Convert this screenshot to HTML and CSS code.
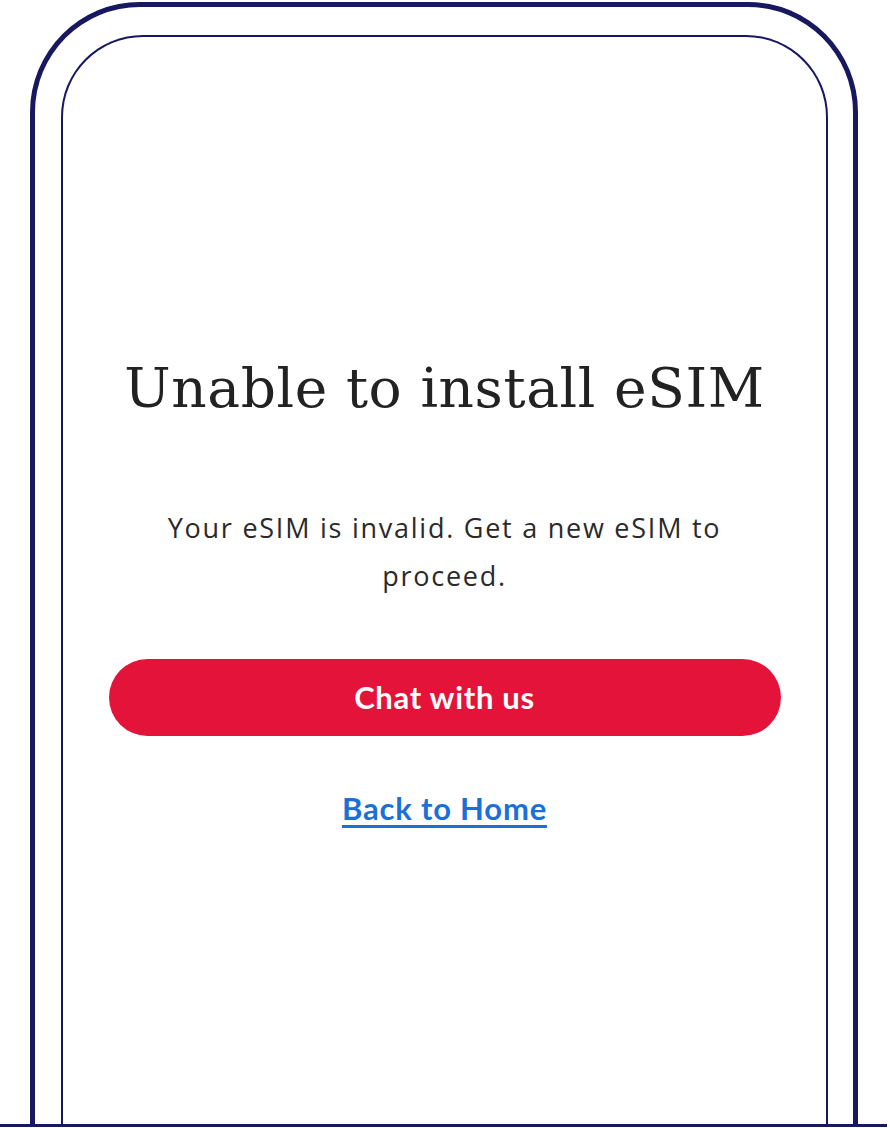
FILE: index.html
```html
<!DOCTYPE html>
<html lang="en">

<head>
    <meta charset="UTF-8">
    <meta name="viewport" content="width=device-width, initial-scale=1.0">
    <title>Unable to install eSIM</title>
    <link rel="stylesheet" href="styles.css">
</head>

<body>
    <div class="phone">
        <div class="screen">
            <div class="content">
                <h1 class="title">Unable to install eSIM</h1>
                <p class="message">Your eSIM is invalid. Get a new eSIM to proceed.</p>
                <a class="btn" href="#">Chat with us</a>
                <a class="link" href="#">Back to Home</a>
            </div>
        </div>
    </div>
    <div class="ground"></div>
</body>

</html>
```

FILE: styles.css
```css
html,
body {
    margin: 0;
    padding: 0;
    background: #fff;
}

body {
    width: 890px;
    height: 1128px;
    display: flex;
    flex-direction: column;
    overflow: hidden;
}

.phone {
    flex: 1;
    display: flex;
    width: 828px;
    margin: 2px 0 0 30px;
    border: 5px solid #17185f;
    border-bottom: none;
    border-radius: 110px 110px 0 0;
    padding: 28px 25px 0 26px;
    box-sizing: border-box;
}

.screen {
    flex: 1;
    border: 2.5px solid #17185f;
    border-bottom: none;
    border-radius: 82px 82px 0 0;
    display: flex;
    justify-content: center;
}

.content {
    width: 672px;
    padding-top: 315px;
    display: flex;
    flex-direction: column;
    align-items: center;
    text-align: center;
}

.title {
    margin: 0;
    font-family: "DejaVu Serif", serif;
    font-weight: normal;
    font-size: 55px;
    letter-spacing: 0.6px;
    line-height: 72px;
    color: #222;
}

.message {
    margin: 80px 0 0;
    width: 590px;
    font-family: "Open Sans", "Noto Sans", sans-serif;
    font-size: 27px;
    letter-spacing: 1.75px;
    line-height: 48px;
    color: #2a2a2a;
}

.btn {
    display: block;
    width: 100%;
    height: 77px;
    margin-top: 59px;
    background: #e4133a;
    border-radius: 39px;
    color: #fff;
    font-family: Lato, "Noto Sans", sans-serif;
    font-weight: bold;
    font-size: 31px;
    letter-spacing: 0.7px;
    line-height: 77px;
    text-decoration: none;
}

.link {
    margin-top: 53px;
    font-family: Lato, "Noto Sans", sans-serif;
    font-weight: bold;
    font-size: 31px;
    letter-spacing: 0.8px;
    color: #1b6fd8;
    text-decoration: underline;
    text-underline-offset: 5px;
}

.ground {
    height: 3px;
    width: 887px;
    background: #17185f;
    margin-bottom: 1px;
}
```
